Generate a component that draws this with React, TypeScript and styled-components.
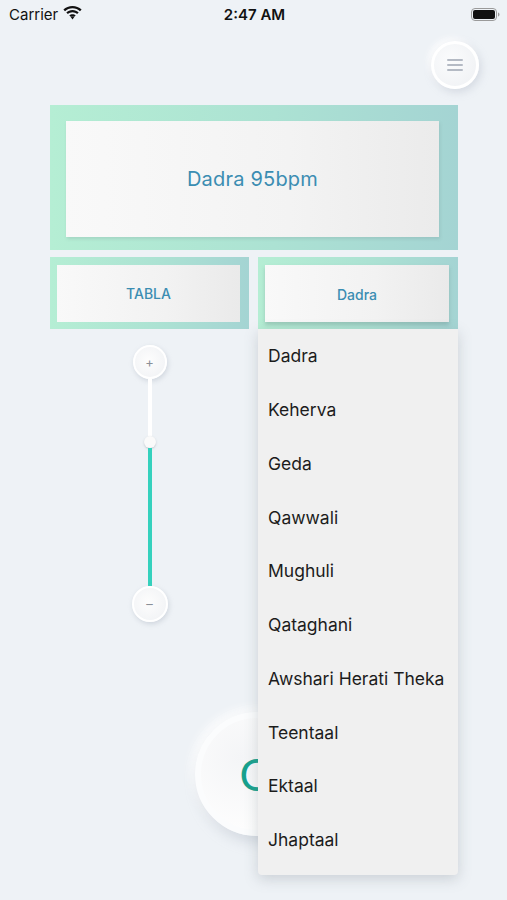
import React, { useState } from 'react';
import styled, { createGlobalStyle } from 'styled-components';

const rhythms = [
  'Dadra',
  'Keherva',
  'Geda',
  'Qawwali',
  'Mughuli',
  'Qataghani',
  'Awshari Herati Theka',
  'Teentaal',
  'Ektaal',
  'Jhaptaal',
];

const GlobalStyle = createGlobalStyle`
  html, body {
    margin: 0;
    padding: 0;
    background: #eef2f6;
  }
  body {
    font-family: Inter, "Noto Sans", "Liberation Sans", sans-serif;
    -webkit-font-smoothing: antialiased;
  }
`;

function WifiIcon() {
  return (
    <svg width="19" height="14" viewBox="0 0 19 14">
      <path d="M9.5 2.2c2.9 0 5.5 1.1 7.5 3l1.6-1.6C16.2 1.3 13 0 9.5 0S2.8 1.3.4 3.6L2 5.2c2-1.9 4.6-3 7.5-3z" fill="#111" />
      <path d="M9.5 6.3c1.8 0 3.4.7 4.6 1.8l1.6-1.6C14.1 5 11.9 4.1 9.5 4.1S4.9 5 3.3 6.5l1.6 1.6c1.2-1.1 2.8-1.8 4.6-1.8z" fill="#111" />
      <path d="M9.5 10.3c.7 0 1.3.3 1.8.7L9.5 13.6 7.7 11c.5-.4 1.1-.7 1.8-.7zM9.5 8.2c1.3 0 2.4.5 3.2 1.2l-1.4 1.4a2.7 2.7 0 0 0-3.6 0L6.3 9.4c.8-.7 1.9-1.2 3.2-1.2z" fill="#111" />
    </svg>
  );
}

function BatteryIcon() {
  return (
    <svg width="29" height="13" viewBox="0 0 29 13">
      <rect x="0.5" y="0.5" width="25" height="12" rx="3.5" fill="none" stroke="#9a9a9a" />
      <rect x="2" y="2" width="22" height="9" rx="2" fill="#111" />
      <path d="M27 4.5v4c.9-.3 1.5-1.1 1.5-2s-.6-1.7-1.5-2z" fill="#9a9a9a" />
    </svg>
  );
}

export default function App() {
  const [rhythm] = useState('Dadra');
  return (
    <>
      <GlobalStyle />
      <Screen>
        <StatusBar>
          <Carrier>
            Carrier <WifiIcon />
          </Carrier>
          <Clock>2:47 AM</Clock>
          <Battery>
            <BatteryIcon />
          </Battery>
        </StatusBar>

        <Header>
          <MenuButton aria-label="menu">
            <MenuLine />
            <MenuLine />
            <MenuLine />
          </MenuButton>
        </Header>

        <Main>
          <DisplayFrame>
            <DisplayInner>{rhythm} 95bpm</DisplayInner>
          </DisplayFrame>

          <SelectRow>
            <SelectFrame>
              <SelectInner>TABLA</SelectInner>
            </SelectFrame>
            <SelectFrame>
              <SelectInner $open>{rhythm}</SelectInner>
            </SelectFrame>
          </SelectRow>

          <Controls>
            <SliderColumn>
              <RoundKnob $size={34}>+</RoundKnob>
              <Track>
                <TrackEmpty />
                <Thumb />
                <TrackFill />
              </Track>
              <RoundKnob $size={36}>–</RoundKnob>
            </SliderColumn>
          </Controls>

          <PlayArea>
            <PlayButton>
              <PlayLabel>O</PlayLabel>
            </PlayButton>
          </PlayArea>

          <Dropdown>
            {rhythms.map((r) => (
              <DropdownItem key={r}>{r}</DropdownItem>
            ))}
          </Dropdown>
        </Main>
      </Screen>
    </>
  );
}

const Screen = styled.div`
  width: 507px;
  height: 900px;
  background: #eef2f6;
  overflow: hidden;
`;

const StatusBar = styled.div`
  height: 28px;
  display: grid;
  grid-template-columns: 1fr auto 1fr;
  align-items: center;
  padding: 0 7px 0 9px;
  font-size: 15px;
  color: #111;
`;

const Carrier = styled.div`
  display: flex;
  align-items: center;
  gap: 5px;
  svg {
    margin-top: -2px;
  }
`;

const Clock = styled.div`
  font-weight: 600;
`;

const Battery = styled.div`
  display: flex;
  justify-content: flex-end;
`;

const Header = styled.div`
  height: 77px;
  display: flex;
  justify-content: flex-end;
  align-items: flex-start;
  padding: 13px 28px 0 0;
  box-sizing: border-box;
`;

const MenuButton = styled.button`
  width: 48px;
  height: 48px;
  border-radius: 50%;
  border: 3px solid #ffffff;
  background: radial-gradient(circle at 40% 40%, #fbfcfd, #eef0f3);
  box-shadow: 2px 3px 8px rgba(160, 170, 185, 0.35), -3px -3px 6px rgba(255, 255, 255, 0.9);
  display: flex;
  flex-direction: column;
  align-items: center;
  justify-content: center;
  gap: 3px;
  padding: 0;
`;

const MenuLine = styled.span`
  width: 16px;
  height: 2px;
  background: #b4bac4;
  border-radius: 1px;
`;

const Main = styled.div`
  position: relative;
  width: 408px;
  margin: 0 0 0 50px;
`;

const frameGradient = `linear-gradient(90deg, #b5eed4 0%, #ace2d3 55%, #a4d4d3 100%)`;

const DisplayFrame = styled.div`
  height: 145px;
  background: ${frameGradient};
  padding: 16px 19px 13px 16px;
  box-sizing: border-box;
  display: flex;
`;

const DisplayInner = styled.div`
  flex: 1;
  background: linear-gradient(90deg, #f9f9f9 0%, #f3f3f3 60%, #ebebeb 100%);
  box-shadow: 1px 2px 3px rgba(120, 150, 150, 0.25);
  display: flex;
  align-items: center;
  justify-content: center;
  font-size: 20px;
  color: #3b8db2;
  letter-spacing: 0.2px;
`;

const SelectRow = styled.div`
  display: grid;
  grid-template-columns: 199px 200px;
  gap: 9px;
  margin-top: 7px;
`;

const SelectFrame = styled.div`
  height: 72px;
  background: ${frameGradient};
  padding: 8px 9px 7px 7px;
  box-sizing: border-box;
  display: flex;
`;

const SelectInner = styled.div<{ $open?: boolean }>`
  flex: 1;
  background: linear-gradient(90deg, #f9f9f9 0%, #f2f2f2 60%, #eaeaea 100%);
  box-shadow: ${(p) => (p.$open ? '0 3px 4px rgba(90, 120, 120, 0.3)' : 'none')};
  display: flex;
  align-items: center;
  justify-content: center;
  font-size: 14px;
  font-weight: 500;
  color: #3b8db2;
  padding-top: ${(p) => (p.$open ? '2px' : '0')};
`;

const Controls = styled.div`
  display: grid;
  grid-template-columns: 199px 1fr;
  margin-top: 16px;
`;

const SliderColumn = styled.div`
  display: flex;
  flex-direction: column;
  align-items: center;
`;

const RoundKnob = styled.div<{ $size: number }>`
  width: ${(p) => p.$size}px;
  height: ${(p) => p.$size}px;
  border-radius: 50%;
  box-sizing: border-box;
  border: 2px solid #ffffff;
  background: radial-gradient(circle at 45% 45%, #fdfdfd, #eff1f4);
  box-shadow: 1px 2px 5px rgba(160, 170, 185, 0.4);
  display: flex;
  align-items: center;
  justify-content: center;
  font-size: 13px;
  color: #8a9098;
  line-height: 1;
`;

const Track = styled.div`
  width: 12px;
  display: flex;
  flex-direction: column;
  align-items: center;
`;

const TrackEmpty = styled.div`
  width: 4px;
  height: 57px;
  background: #ffffff;
`;

const Thumb = styled.div`
  width: 12px;
  height: 12px;
  border-radius: 50%;
  background: #fafafa;
  box-shadow: 0 1px 2px rgba(150, 160, 170, 0.5);
`;

const TrackFill = styled.div`
  width: 4px;
  height: 138px;
  background: #34d1bd;
`;

const PlayArea = styled.div`
  display: flex;
  justify-content: center;
  margin-top: 90px;
  padding-left: 6px;
`;

const PlayButton = styled.div`
  width: 124px;
  height: 124px;
  border-radius: 50%;
  box-sizing: border-box;
  border: 6px solid #fbfcfd;
  background: radial-gradient(circle at 35% 35%, #f4f5f7, #fdfdfd 70%);
  box-shadow: 4px 6px 14px rgba(160, 170, 185, 0.4), -4px -4px 10px rgba(255, 255, 255, 0.9);
  display: flex;
  align-items: center;
  justify-content: center;
`;

const PlayLabel = styled.span`
  font-family: Lato, "Open Sans", sans-serif;
  font-weight: 400;
  font-size: 44px;
  color: #17a18d;
  line-height: 1;
`;

const Dropdown = styled.div`
  position: absolute;
  top: 224px;
  left: 208px;
  width: 200px;
  padding-bottom: 8px;
  background: #f0f0f0;
  border-radius: 0 0 4px 4px;
  box-shadow: 0 4px 14px rgba(120, 130, 140, 0.3);
  display: flex;
  flex-direction: column;
`;

const DropdownItem = styled.div`
  height: 53.75px;
  display: flex;
  align-items: center;
  padding: 0 10px;
  font-size: 17.5px;
  color: #1c1c1c;
  white-space: nowrap;
`;
